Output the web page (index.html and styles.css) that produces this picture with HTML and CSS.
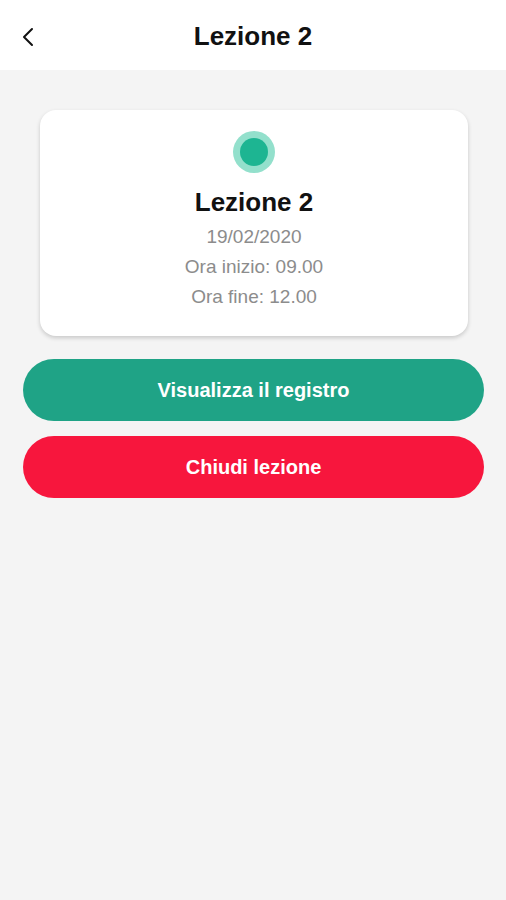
FILE: index.html
```html
<!DOCTYPE html>
<html lang="it">
<head>
<meta charset="UTF-8" />
<meta name="viewport" content="width=device-width, initial-scale=1" />
<title>Lezione 2</title>
<link rel="stylesheet" href="styles.css">
</head>
<body>
<header class="top-bar">
  <button class="back-btn" aria-label="Indietro">
    <svg width="14" height="20" viewBox="0 0 14 20">
      <polyline points="11,2 3,10 11,18" fill="none" stroke="#111" stroke-width="2" stroke-linecap="round" stroke-linejoin="round" />
    </svg>
  </button>
  <h1 class="top-title">Lezione 2</h1>
</header>

<main class="content">
  <section class="lesson-card">
    <div class="status-dot"><span></span></div>
    <h2 class="lesson-title">Lezione 2</h2>
    <p class="lesson-line">19/02/2020</p>
    <p class="lesson-line">Ora inizio: 09.00</p>
    <p class="lesson-line">Ora fine: 12.00</p>
  </section>

  <div class="actions">
    <button class="pill-btn pill-green">Visualizza il registro</button>
    <button class="pill-btn pill-red">Chiudi lezione</button>
  </div>
</main>
</body>
</html>
```

FILE: styles.css
```css
* {
  box-sizing: border-box;
}

body {
  margin: 0;
  font-family: "Liberation Sans", Arial, sans-serif;
  background: #f4f4f4;
  color: #111;
  min-height: 100vh;
}

/* Header */
.top-bar {
  position: relative;
  height: 70px;
  background: #fff;
  display: flex;
  align-items: center;
  justify-content: center;
}

.back-btn {
  position: absolute;
  left: 21px;
  top: 27px;
  padding: 0;
  border: none;
  background: none;
  display: flex;
}

.top-title {
  margin: 0;
  font-size: 26px;
  font-weight: 700;
  line-height: 70px;
  padding-top: 2px;
}

/* Content */
.content {
  padding: 40px 22px 0 23px;
}

.lesson-card {
  margin: 0 16px 0 17px;
  background: #fff;
  border-radius: 16px;
  box-shadow: 0 2px 4px rgba(0, 0, 0, 0.18);
  padding: 21px 0 24px;
  display: flex;
  flex-direction: column;
  align-items: center;
}

.status-dot {
  width: 42px;
  height: 42px;
  border-radius: 50%;
  background: #93e0cc;
  display: flex;
  align-items: center;
  justify-content: center;
}

.status-dot span {
  width: 28px;
  height: 28px;
  border-radius: 50%;
  background: #1db592;
}

.lesson-title {
  margin: 13px 0 4px;
  font-size: 26px;
  font-weight: 700;
  line-height: 32px;
}

.lesson-line {
  margin: 0;
  font-size: 19px;
  line-height: 30px;
  color: #8c8c8c;
}

.actions {
  margin-top: 23px;
  display: flex;
  flex-direction: column;
  gap: 15px;
}

.pill-btn {
  height: 62px;
  border: none;
  border-radius: 31px;
  color: #fff;
  font-family: inherit;
  font-size: 20px;
  font-weight: 700;
  cursor: pointer;
}

.pill-green {
  background: #1fa386;
}

.pill-red {
  background: #f7163d;
}
```
